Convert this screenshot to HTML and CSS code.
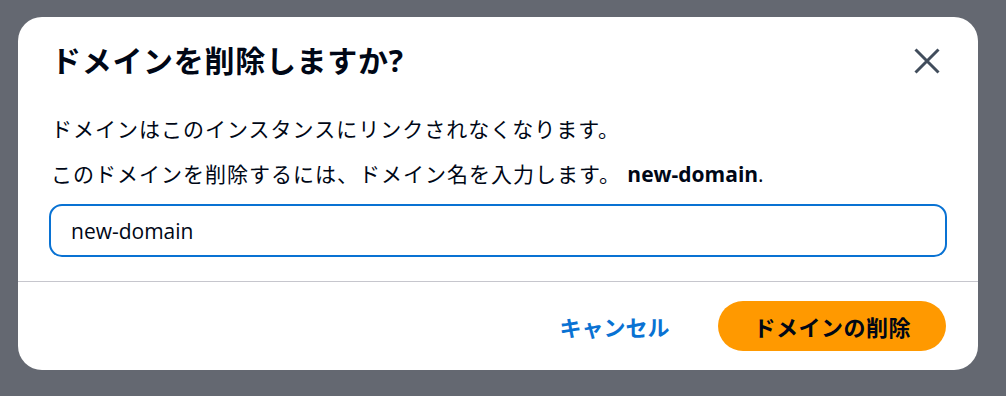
FILE: index.html
```html
<!DOCTYPE html>
<html lang="ja">
<head>
    <meta charset="UTF-8">
    <title>ドメインを削除しますか?</title>
    <meta name="viewport" content="width=device-width, initial-scale=1.0">
    <link rel="stylesheet" href="styles.css">
</head>
<body>
<div class="modal">
    <!-- En-tête -->
    <div class="modal-header">
        <h2>ドメインを削除しますか?</h2>
        <button class="close" aria-label="閉じる">
            <svg viewBox="0 0 26 26" width="26" height="26">
                <path d="M1.5 1.5 L24.5 24.5 M24.5 1.5 L1.5 24.5" stroke="#414d5c" stroke-width="3" fill="none" />
            </svg>
        </button>
    </div>

    <div class="modal-body">
        <p>ドメインはこのインスタンスにリンクされなくなります。</p>
        <p>このドメインを削除するには、ドメイン名を入力します。 <b>new-domain</b>.</p>
        <input class="field" type="text" value="new-domain">
    </div>

    <div class="modal-footer">
        <button class="link-btn">キャンセル</button>
        <button class="primary-btn">ドメインの削除</button>
    </div>
</div>
</body>
</html>
```

FILE: styles.css
```css
body {
    margin: 0;
    height: 396px;
    background-color: #646871;
    font-family: "Open Sans", "Noto Sans CJK JP", sans-serif;
    color: #000716;
    padding: 17px 0 0 18px;
    box-sizing: border-box;
}

.modal {
    width: 960px;
    height: 353px;
    background: white;
    border-radius: 24px;
    display: flex;
    flex-direction: column;
}

.modal-header {
    display: flex;
    justify-content: space-between;
    align-items: center;
    padding: 26px 38px 0 33px;
}

.modal-header h2 {
    margin: 0;
    font-size: 30px;
    line-height: 36px;
    font-weight: bold;
    letter-spacing: 0.7px;
}

.close {
    border: none;
    background: none;
    padding: 0;
    width: 26px;
    height: 26px;
    display: flex;
}

.modal-body {
    padding: 35px 31px 24px 31px;
    border-bottom: 1px solid #c6c6cd;
}

.modal-body p {
    margin: 0 0 15px 2px;
    font-size: 21px;
    line-height: 30px;
    letter-spacing: 1px;
}

.modal-body p b {
    font-weight: bold;
    letter-spacing: 0;
}

.field {
    display: block;
    width: 100%;
    box-sizing: border-box;
    height: 53px;
    border: 2px solid #0972d3;
    border-radius: 13px;
    padding: 0 20px;
    font-family: "Open Sans", "Noto Sans CJK JP", sans-serif;
    font-size: 21px;
    color: #000716;
    outline: none;
}

.modal-footer {
    display: flex;
    justify-content: flex-end;
    align-items: center;
    gap: 49px;
    padding: 19px 32px 0 0;
}

.link-btn {
    border: none;
    background: none;
    padding: 0;
    font-family: "Open Sans", "Noto Sans CJK JP", sans-serif;
    font-size: 22px;
    font-weight: bold;
    color: #0972d3;
}

.primary-btn {
    height: 50px;
    padding: 0 35px;
    border: none;
    border-radius: 25px;
    background: #ff9900;
    font-family: "Open Sans", "Noto Sans CJK JP", sans-serif;
    font-size: 22px;
    font-weight: bold;
    letter-spacing: 0.5px;
    color: #000716;
}
```
